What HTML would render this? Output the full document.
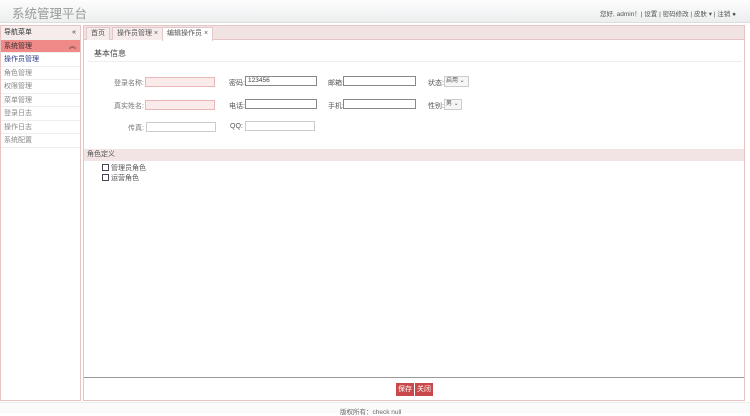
<!DOCTYPE html>
<html><head><meta charset="utf-8"><style>
*{margin:0;padding:0;box-sizing:border-box}
body{width:750px;height:413px;overflow:hidden;background:#fff;font-family:"Liberation Sans","Noto Sans CJK SC",sans-serif;font-size:7px;color:#555;position:relative}
.abs{position:absolute}
#hd{left:0;top:0;width:750px;height:23px;background:linear-gradient(#fdfdfd,#eceeef);border-bottom:1px solid #ddd}
#hd .t{left:12px;top:3px;font-size:12.5px;color:#999}
#hd .r{right:14px;top:8px;font-size:6.5px;color:#555}
#side{left:0;top:25px;width:81px;height:376px;border:1px solid #e6c4c4;background:#fff}
.row{position:absolute;left:0;width:79px;height:13.5px;line-height:13.5px;padding-left:3px;border-bottom:1px solid #eee;color:#888}
#main{left:83px;top:25px;width:662px;height:376px;border:1px solid #e6c4c4;background:#fff}
.tabs{left:0;top:0;width:660px;height:14px;background:#f2e3e3;border-bottom:1px solid #e6c4c4}
.tab{position:absolute;top:1px;height:13px;line-height:12px;border:1px solid #e2c8c8;border-bottom:none;background:#f6ecec;padding:0 4px;color:#555}
.lbl{position:absolute;text-align:right;width:60px;color:#777}
.in{position:absolute;height:10px;border:1px solid #888;background:#fff;font-size:6.5px;line-height:8px;padding-left:2px;color:#444}
.pk{background:#fbeaea;border-color:#e8b8b8}
.lt{border-color:#ccc}
.sel{position:absolute;height:11px;border:1px solid #ccc;background:#f6f6f6;font-size:6px;line-height:9px;padding-left:1px}
.btn{position:absolute;top:357px;height:13px;line-height:13px;background:#c9494b;color:#fff;padding:0 2px}
.cb{position:absolute;left:18px;width:7px;height:7px;border:1px solid #445}
</style></head><body>
<div id="hd" class="abs"><div class="t abs">系统管理平台</div><div class="r abs">您好, admin！| 设置 | 密码修改 | 皮肤 ▾ | 注销 ●</div></div>
<div id="side" class="abs">
<div class="row" style="top:0;background:#f6ecec;color:#333">导航菜单<span style="position:absolute;right:4px">«</span></div>
<div class="row" style="top:13.5px;background:#f08a88;color:#333">系统管理<span style="position:absolute;right:4px">︽</span></div>
<div class="row" style="top:27px;color:#2a3a8a">操作员管理</div>
<div class="row" style="top:40.5px">角色管理</div>
<div class="row" style="top:54px">权限管理</div>
<div class="row" style="top:67.5px">菜单管理</div>
<div class="row" style="top:81px">登录日志</div>
<div class="row" style="top:94.5px">操作日志</div>
<div class="row" style="top:108px">系统配置</div>
</div>
<div id="main" class="abs">
<div class="tabs abs">
<div class="tab" style="left:2px">首页</div>
<div class="tab" style="left:28px">操作员管理 ×</div>
<div class="tab" style="left:78px;background:#fff;height:14px">编辑操作员 ×</div>
</div>
<div class="abs" style="left:10px;top:22px;font-size:8px;color:#444">基本信息</div>
<div class="abs" style="left:4px;top:35px;width:654px;border-top:1px solid #eee"></div>
<div class="lbl" style="left:0;top:52px">登录名称:</div><div class="in pk" style="left:61px;top:51px;width:70px"></div>
<div class="lbl" style="left:0;top:75px">真实姓名:</div><div class="in pk" style="left:61px;top:74px;width:70px"></div>
<div class="lbl" style="left:0;top:97px">传真:</div><div class="in lt" style="left:62px;top:96px;width:70px"></div>
<div class="abs" style="left:145px;top:52px">密码:</div><div class="in" style="left:161px;top:50px;width:72px">123456</div>
<div class="abs" style="left:145px;top:75px">电话:</div><div class="in" style="left:161px;top:73px;width:72px"></div>
<div class="abs" style="left:146px;top:97px">QQ:</div><div class="in lt" style="left:161px;top:95px;width:70px"></div>
<div class="abs" style="left:244px;top:52px">邮箱:</div><div class="in" style="left:259px;top:50px;width:73px"></div>
<div class="abs" style="left:244px;top:75px">手机:</div><div class="in" style="left:259px;top:73px;width:73px"></div>
<div class="abs" style="left:344px;top:52px">状态:</div><div class="sel" style="left:360px;top:50px;width:25px">启用 ⌄</div>
<div class="abs" style="left:344px;top:75px">性别:</div><div class="sel" style="left:360px;top:73px;width:18px">男 ⌄</div>
<div class="abs" style="left:0;top:123px;width:660px;height:12px;background:#f2e4e4;line-height:12px;padding-left:3px">角色定义</div>
<div class="cb" style="top:138px"></div><div class="abs" style="left:27px;top:137px">管理员角色</div>
<div class="cb" style="top:148px"></div><div class="abs" style="left:27px;top:147px">运营角色</div>
<div class="abs" style="left:0;top:351px;width:660px;border-top:1px solid #999"></div>
<div class="btn" style="left:312px">保存</div><div class="btn" style="left:331px">关闭</div>
</div>
<div class="abs" style="left:0;top:402px;width:750px;height:11px;background:#fafafa;border-top:1px solid #eee"></div>
<div class="abs" style="left:340px;top:406px;font-size:6.5px;color:#666">版权所有：check null</div>
</body></html>
